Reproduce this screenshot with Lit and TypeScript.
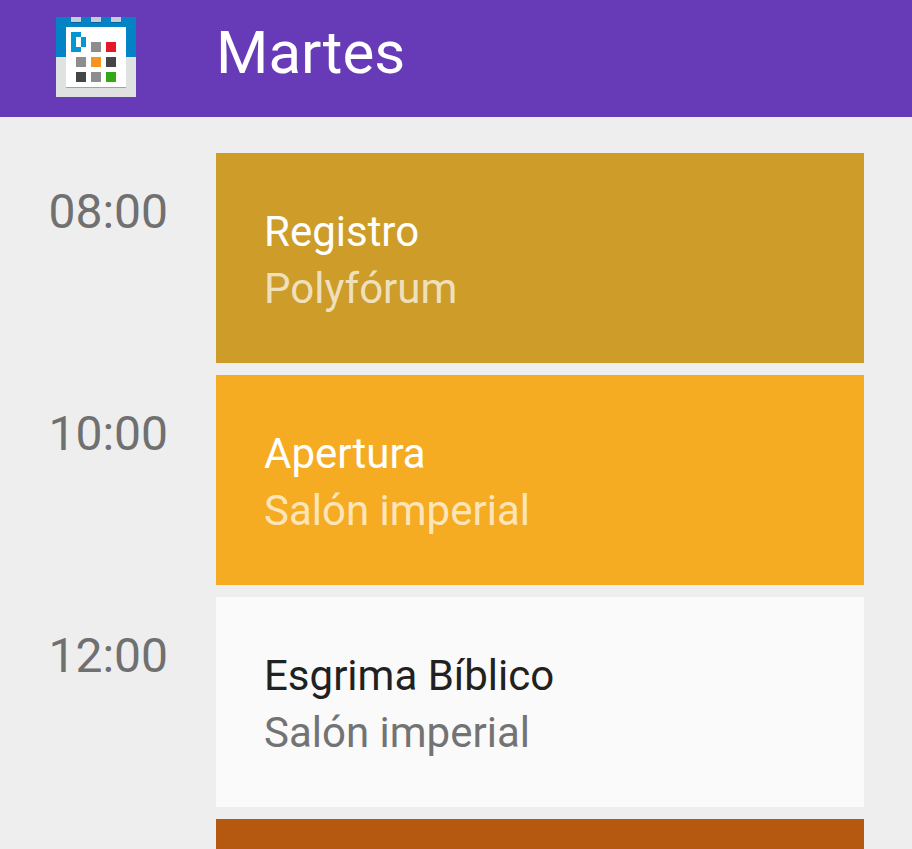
import { LitElement, html, css, svg } from "lit";
import { customElement } from "lit/decorators.js";
import { classMap } from "lit/directives/class-map.js";

interface Slot { time: string; title: string; place: string; tone: string; }

const SLOTS: Slot[] = [
  { time: "08:00", title: "Registro", place: "Polyfórum", tone: "gold" },
  { time: "10:00", title: "Apertura", place: "Salón imperial", tone: "amber" },
  { time: "12:00", title: "Esgrima Bíblico", place: "Salón imperial", tone: "plain" },
  { time: "", title: "", place: "", tone: "rust" },
];

const CELLS: [number, number, string][] = [
  [35, 25, "#8d8d8d"], [50, 25, "#e51728"],
  [20, 40, "#8d8d8d"], [35, 40, "#f79321"], [50, 40, "#454547"],
  [20, 55, "#454547"], [35, 55, "#8d8d8d"], [50, 55, "#32a815"],
];

@customElement("app-root")
export class AppRoot extends LitElement {
  static styles = css`
    :host { display: block; height: 849px; overflow: hidden; background: #eeeeee; font-family: Roboto, sans-serif; }
    header { height: 117px; box-sizing: border-box; background: #673ab7; display: flex; align-items: flex-start; padding: 17px 0 0 56px; }
    .logo { width: 80px; height: 80px; display: block; }
    h1 { margin: 1px 0 0 80px; font-size: 60px; line-height: 70px; font-weight: 400; color: #fff; }
    main { padding: 36px 48px 0 0; display: flex; flex-direction: column; gap: 12px; }
    .row { display: flex; }
    .time { width: 168px; margin-right: 48px; text-align: right; padding-top: 31px; font-size: 48px; line-height: 56px; color: #707070; }
    .card { flex: 1; height: 210px; box-sizing: border-box; padding: 50px 48px 0; font-size: 42px; line-height: 57px; }
    .title { color: #fff; }
    .place { color: rgba(255, 255, 255, 0.7); }
    .gold { background: #cd9c29; }
    .amber { background: #f6ac22; }
    .plain { background: #fafafa; }
    .rust { background: #b4590f; }
    .plain .title { color: #212121; }
    .plain .place { color: #737373; }
  `;

  render() {
    return html`
      <header>
        <svg class="logo" viewBox="0 0 80 80" shape-rendering="crispEdges">
          <rect width="80" height="40" fill="#0482c6" />
          <rect y="40" width="80" height="40" fill="#e0e2e1" />
          <path d="M15 0h10v5h-10zM35 0h10v5h-10zM55 0h10v5h-10z" fill="#c9cbd8" />
          <path d="M15 5h10v1h-10zM35 5h10v1h-10zM55 5h10v1h-10z" fill="#03659b" />
          <rect x="10" y="10" width="60" height="60" fill="#fff" />
          <rect x="10" y="70" width="60" height="1" fill="#a3a3a3" />
          <path d="M15 15h10v5h5v10h-5v5h-10zM20 20v10h5v-10z" fill="#0496d2" fill-rule="evenodd" />
          ${CELLS.map(([x, y, c]) => svg`<rect x=${x} y=${y} width="10" height="10" fill=${c} />`)}
        </svg>
        <h1>Martes</h1>
      </header>
      <main>
        ${SLOTS.map((s) => html`
          <div class="row">
            <div class="time">${s.time}</div>
            <div class=${classMap({ card: true, [s.tone]: true })}>
              <div class="title">${s.title}</div>
              <div class="place">${s.place}</div>
            </div>
          </div>`)}
      </main>`;
  }
}
